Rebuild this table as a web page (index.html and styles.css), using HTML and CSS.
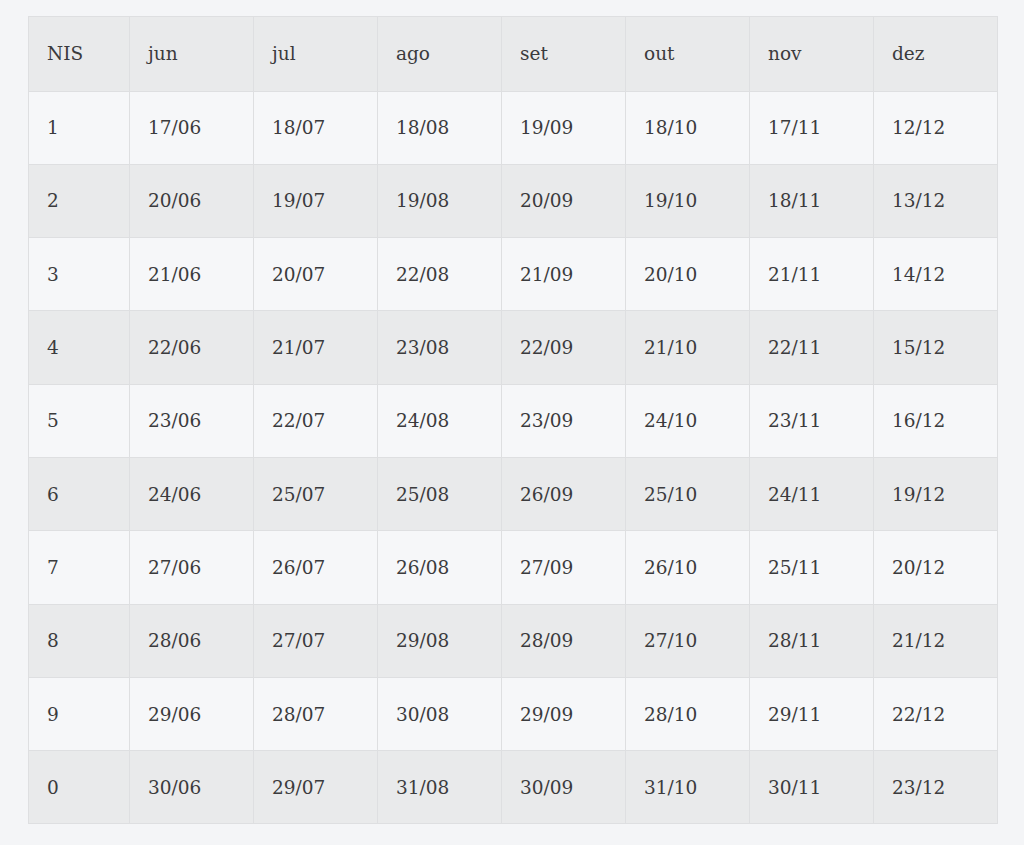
FILE: index.html
```html
<!DOCTYPE html>
<html lang="pt">
<head>
<meta charset="utf-8">
<title>Calendário NIS</title>
<link rel="stylesheet" href="styles.css">
</head>
<body>
<table class="cal">
  <colgroup>
    <col class="c-nis"><col class="c-m"><col class="c-m"><col class="c-m"><col class="c-m"><col class="c-m"><col class="c-m"><col class="c-m">
  </colgroup>
  <thead>
    <tr><th>NIS</th><th>jun</th><th>jul</th><th>ago</th><th>set</th><th>out</th><th>nov</th><th>dez</th></tr>
  </thead>
  <tbody>
    <tr><td>1</td><td>17/06</td><td>18/07</td><td>18/08</td><td>19/09</td><td>18/10</td><td>17/11</td><td>12/12</td></tr>
    <tr><td>2</td><td>20/06</td><td>19/07</td><td>19/08</td><td>20/09</td><td>19/10</td><td>18/11</td><td>13/12</td></tr>
    <tr><td>3</td><td>21/06</td><td>20/07</td><td>22/08</td><td>21/09</td><td>20/10</td><td>21/11</td><td>14/12</td></tr>
    <tr><td>4</td><td>22/06</td><td>21/07</td><td>23/08</td><td>22/09</td><td>21/10</td><td>22/11</td><td>15/12</td></tr>
    <tr><td>5</td><td>23/06</td><td>22/07</td><td>24/08</td><td>23/09</td><td>24/10</td><td>23/11</td><td>16/12</td></tr>
    <tr><td>6</td><td>24/06</td><td>25/07</td><td>25/08</td><td>26/09</td><td>25/10</td><td>24/11</td><td>19/12</td></tr>
    <tr><td>7</td><td>27/06</td><td>26/07</td><td>26/08</td><td>27/09</td><td>26/10</td><td>25/11</td><td>20/12</td></tr>
    <tr><td>8</td><td>28/06</td><td>27/07</td><td>29/08</td><td>28/09</td><td>27/10</td><td>28/11</td><td>21/12</td></tr>
    <tr><td>9</td><td>29/06</td><td>28/07</td><td>30/08</td><td>29/09</td><td>28/10</td><td>29/11</td><td>22/12</td></tr>
    <tr><td>0</td><td>30/06</td><td>29/07</td><td>31/08</td><td>30/09</td><td>31/10</td><td>30/11</td><td>23/12</td></tr>
  </tbody>
</table>
</body>
</html>
```
FILE: styles.css
```css
html, body {
  margin: 0;
  background: #f4f5f7;
}
body {
  padding: 16px 0 0 28px;
  font-family: "DejaVu Serif", "Liberation Serif", serif;
  color: #3b3b3d;
}
.cal {
  border-collapse: collapse;
  table-layout: fixed;
  width: 970px;
  font-size: 18.5px;
}
.c-nis { width: 101px; }
.c-m { width: 124px; }
.cal th, .cal td {
  border: 1px solid #dedfe1;
  text-align: left;
  font-weight: normal;
  padding: 0 0 0 18px;
  height: 72.3px;
  vertical-align: middle;
}
.cal th { height: 73.5px; }
.cal thead tr { background: #e9eaeb; }
.cal tbody tr:nth-child(odd) { background: #f6f7f9; }
.cal tbody tr:nth-child(even) { background: #e9eaeb; }
```
